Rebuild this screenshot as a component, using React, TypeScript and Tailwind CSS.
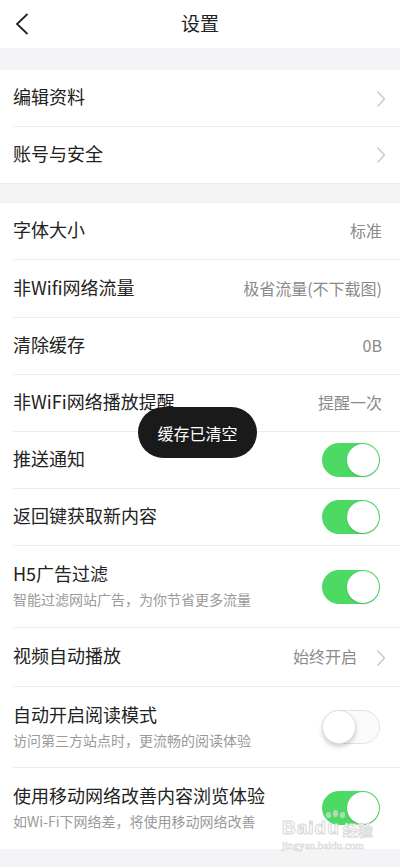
import React from "react";

const font = { fontFamily: '"Noto Sans CJK SC", "Noto Sans", sans-serif' };

function Chevron() {
  return (
    <svg width="10" height="18" viewBox="0 0 10 18" className="shrink-0">
      <path d="M1.5 1.5 L8.5 9 L1.5 16.5" fill="none" stroke="#c8c8cc" strokeWidth="1.4" />
    </svg>
  );
}

function Toggle({ on }: { on: boolean }) {
  if (on) {
    return (
      <div className="flex items-center justify-end p-[1px] w-[58px] h-[34px] rounded-full bg-[#4cd964] shrink-0">
        <div className="w-[32px] h-[32px] rounded-full bg-white shadow-[0_1px_2px_rgba(0,0,0,0.15)]" />
      </div>
    );
  }
  return (
    <div className="flex items-center justify-start w-[58px] h-[34px] rounded-full bg-[#fbfbfb] border border-[#e3e3e3] shrink-0">
      <div className="-ml-[1px] w-[34px] h-[34px] rounded-full bg-white border border-[#e0e0e0] shadow-[0_3px_4px_rgba(0,0,0,0.18)]" />
    </div>
  );
}

function Row({
  title,
  value,
  chevron,
  toggle,
  sub,
  last,
  h,
}: {
  title: string;
  value?: string;
  chevron?: boolean;
  toggle?: boolean | null;
  sub?: string;
  last?: boolean;
  h: string;
}) {
  return (
    <div className={`relative flex items-center pl-[13px] pr-[14px] ${h}`}>
      <div className="flex-1 flex flex-col pb-[5px]">
        <div className="text-[18px] leading-[24px] text-[#222]">{title}</div>
        {sub && <div className="text-[14px] leading-[18px] text-[#9a9a9a] mt-[5px]">{sub}</div>}
      </div>
      {value && (
        <div className={`text-[16px] text-[#8a8a8a] pb-[3px] ${chevron ? "mr-[19px]" : "mr-[4px]"}`}>{value}</div>
      )}
      {chevron && <Chevron />}
      {toggle !== undefined && toggle !== null && (
        <div className="mr-[6px] pb-[1px]">
          <Toggle on={toggle} />
        </div>
      )}
      {!last && <div className="absolute left-[13px] right-0 bottom-0 h-px bg-[#ececec]" />}
    </div>
  );
}

export default function App() {
  return (
    <div className="relative w-[400px] h-[867px] bg-[#f4f4f6] overflow-hidden" style={font}>
      {/* Header */}
      <div className="relative h-[48px] bg-white flex items-center justify-center">
        <div className="absolute left-[15px] top-[13px]">
          <svg width="14" height="22" viewBox="0 0 14 22">
            <path d="M12.5 1 L2 11 L12.5 21" fill="none" stroke="#222" strokeWidth="1.8" />
          </svg>
        </div>
        <div className="text-[19px] text-[#222] pb-[1px]">设置</div>
      </div>

      <div className="h-[22px]" />

      <div className="bg-white border-b border-[#ececec]">
        <Row title="编辑资料" chevron h="h-[57px]" />
        <Row title="账号与安全" chevron last h="h-[56px]" />
      </div>

      <div className="h-[18px]" />

      <div className="bg-white border-t border-[#ececec]">
        <Row title="字体大小" value="标准" h="h-[57px]" />
        <Row title="非Wifi网络流量" value="极省流量(不下载图)" h="h-[58px]" />
        <Row title="清除缓存" value="0B" h="h-[57px]" />
        <Row title="非WiFi网络播放提醒" value="提醒一次" h="h-[57px]" />
        <Row title="推送通知" toggle h="h-[57px]" />
        <Row title="返回键获取新内容" toggle h="h-[57px]" />
        <Row title="H5广告过滤" sub="智能过滤网站广告，为你节省更多流量" toggle h="h-[82px]" />
        <Row title="视频自动播放" value="始终开启" chevron h="h-[59px]" />
        <Row title="自动开启阅读模式" sub="访问第三方站点时，更流畅的阅读体验" toggle={false} h="h-[81px]" />
        <Row title="使用移动网络改善内容浏览体验" sub="如Wi-Fi下网络差，将使用移动网络改善" toggle last h="h-[81px]" />
      </div>

      {/* Toast */}
      <div className="absolute left-[138px] top-[407px] w-[119px] h-[51px] rounded-full bg-[#1a1a1a] flex items-center justify-center">
        <span className="text-[16px] text-white">缓存已清空</span>
      </div>

      {/* Watermark */}
      <div className="absolute left-[282px] top-[810px] pointer-events-none flex flex-col items-start">
        <div className="flex gap-[2px] ml-[44px] h-[8px] items-end">
          <div className="w-[5px] h-[6px] rounded-full bg-[#dcdcdc] opacity-70" />
          <div className="w-[5px] h-[7px] rounded-full bg-[#dcdcdc] opacity-70 mb-[1px]" />
          <div className="w-[5px] h-[6px] rounded-full bg-[#dcdcdc] opacity-70" />
        </div>
        <div className="flex items-end leading-none">
          <span
            className="text-[19px] font-bold text-white tracking-[1px]"
            style={{ fontFamily: '"Liberation Sans", sans-serif', WebkitTextStroke: "1px #d8d8d8" }}
          >
            Baidu
          </span>
          <span className="ml-[3px] text-[15px] font-bold text-white" style={{ ...font, WebkitTextStroke: "0.8px #d8d8d8" }}>
            经验
          </span>
        </div>
        <div
          className="mt-[3px] text-[11px] text-white leading-none"
          style={{ fontFamily: '"Liberation Serif", serif', WebkitTextStroke: "0.6px #d8d8d8" }}
        >
          jingyan.baidu.com
        </div>
      </div>
    </div>
  );
}
